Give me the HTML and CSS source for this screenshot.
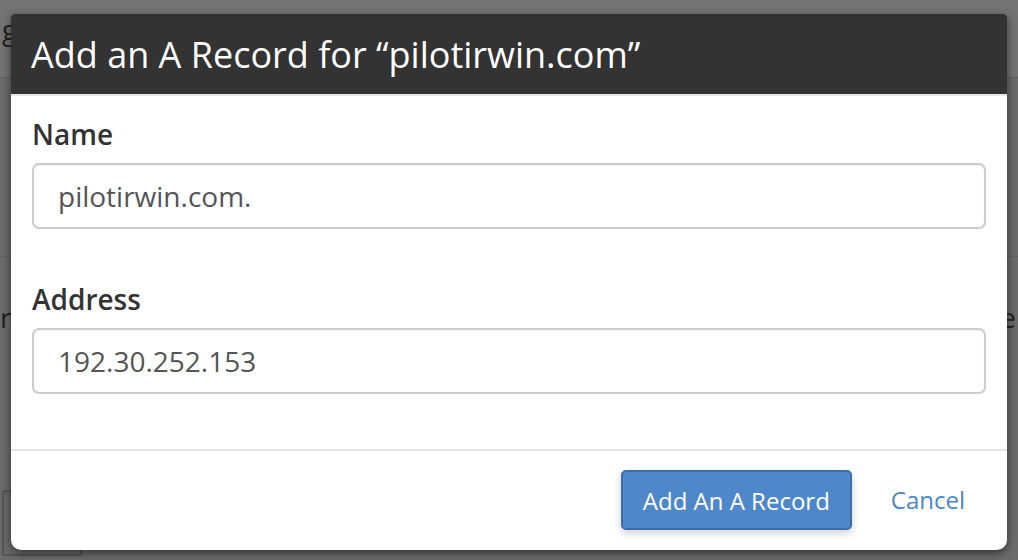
FILE: index.html
```html
<!DOCTYPE html>
<html lang="en">
<head>
<meta charset="utf-8">
<title>Add an A Record</title>
<link rel="stylesheet" href="styles.css">
</head>
<body>
<div class="page">
  <div class="topbar"><span class="top-word">g</span></div>
  <div class="row-one"></div>
  <div class="row-two">
    <div class="row-text"><span class="clip-left">r</span><span class="clip-right">e</span></div>
    <div class="small-box"></div>
  </div>
</div>

<div class="modal" role="dialog" aria-labelledby="modal-title">
  <div class="modal-header">
    <h3 id="modal-title" class="modal-title">Add an A Record for “pilotirwin.com”</h3>
  </div>
  <div class="modal-body">
    <div class="form-group">
      <label class="form-label" for="name">Name</label>
      <input class="form-control" id="name" type="text" value="pilotirwin.com.">
    </div>
    <div class="form-group">
      <label class="form-label" for="address">Address</label>
      <input class="form-control" id="address" type="text" value="192.30.252.153">
    </div>
  </div>
  <div class="modal-footer">
    <button class="btn-primary" type="button">Add An A Record</button>
    <a class="btn-link" href="#">Cancel</a>
  </div>
</div>
</body>
</html>
```

FILE: styles.css
```css
* { box-sizing: border-box; }

html, body {
  margin: 0;
  padding: 0;
}

body {
  width: 1018px;
  height: 560px;
  overflow: hidden;
  font-family: "Open Sans", "Liberation Sans", sans-serif;
  background: #6b6b6b;
  position: relative;
}

/* dimmed page behind the dialog */
.page {
  height: 560px;
  background: #6b6b6b;
}

.topbar {
  height: 78px;
  background: #747474;
  border-bottom: 1px solid #5e5e5e;
  font-size: 28px;
  line-height: 58px;
  color: #1f1f1f;
  overflow: hidden;
  padding-left: 2px;
}

.row-one {
  height: 179px;
  border-bottom: 1px solid #606060;
}

.row-two {
  height: 303px;
  display: flex;
  flex-direction: column;
}

.row-text {
  display: flex;
  justify-content: space-between;
  font-size: 28px;
  line-height: 40px;
  color: #1f1f1f;
  margin-top: 40px;
}

.clip-left { margin-left: 0; }
.clip-right { margin-right: 2px; }

.small-box {
  width: 80px;
  height: 66px;
  margin-top: 153px;
  margin-left: 2px;
  border: 2px solid #555;
  border-radius: 3px;
  background: #6a6a6a;
}

/* dialog */
.modal {
  position: absolute;
  left: 11px;
  top: 14px;
  width: 996px;
  height: 536px;
  background: #fff;
  border-radius: 3px 3px 10px 10px;
  box-shadow: 0 3px 10px rgba(0, 0, 0, 0.55);
  display: flex;
  flex-direction: column;
  overflow: hidden;
}

.modal-header {
  height: 82px;
  background: #333;
  border-bottom: 2px solid #e5e5e5;
  display: flex;
  align-items: center;
  padding: 0 20px;
}

.modal-title {
  margin: 0;
  font-size: 36px;
  font-weight: 400;
  line-height: 48px;
  color: #fff;
  padding-top: 2px;
}

.modal-body {
  padding: 18px 21px 0;
  height: 355px;
  border-bottom: 2px solid #e5e5e5;
}

.form-group {
  display: flex;
  flex-direction: column;
}

.form-group + .form-group {
  margin-top: 50px;
}

.form-label {
  font-size: 28px;
  font-weight: 600;
  line-height: 40px;
  color: #333;
  margin-bottom: 9px;
}

.form-control {
  height: 66px;
  width: 100%;
  border: 2px solid #ccc;
  border-radius: 7px;
  padding: 0 24px;
  font-family: "Open Sans", "Liberation Sans", sans-serif;
  font-size: 28px;
  color: #555;
  background: #fff;
  box-shadow: inset 0 1px 2px rgba(0, 0, 0, 0.06);
  outline: none;
}

.modal-footer {
  flex: 1;
  display: flex;
  align-items: flex-start;
  justify-content: flex-end;
  padding: 19px 42px 0 0;
  gap: 39px;
}

.btn-primary {
  width: 231px;
  height: 60px;
  background: #4e88ca;
  border: 2px solid #3c6ea9;
  border-radius: 5px;
  color: #fff;
  font-family: "Open Sans", "Liberation Sans", sans-serif;
  font-size: 24px;
  box-shadow: 0 3px 9px rgba(0, 0, 0, 0.2);
  padding: 0;
}

.btn-link {
  font-size: 24px;
  line-height: 60px;
  color: #4a86c8;
  text-decoration: none;
}
```
